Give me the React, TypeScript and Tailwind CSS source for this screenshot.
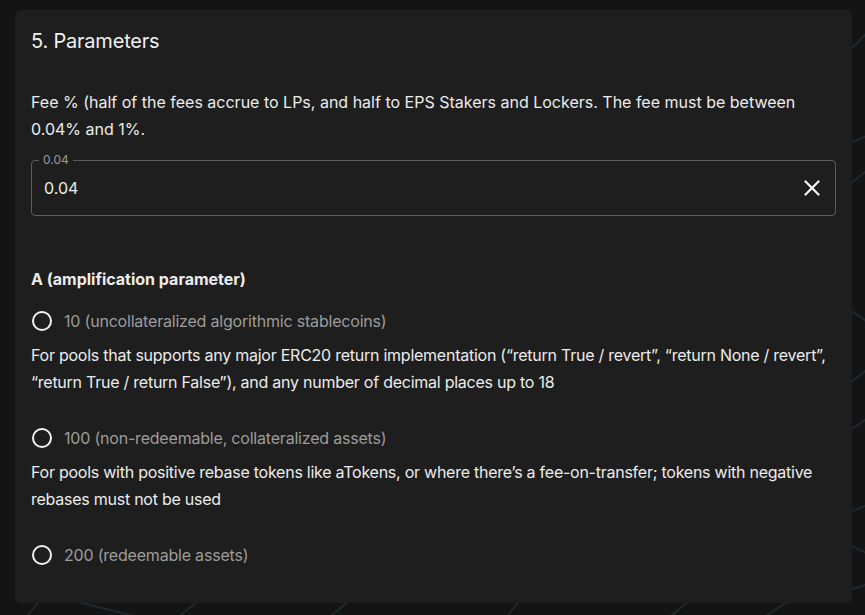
import { X } from "lucide-react";

const options = [
  {
    label: "10 (uncollateralized algorithmic stablecoins)",
    hint: "For pools that supports any major ERC20 return implementation (\u201creturn True / revert\u201d, \u201creturn None / revert\u201d, \u201creturn True / return False\u201d), and any number of decimal places up to 18",
  },
  {
    label: "100 (non-redeemable, collateralized assets)",
    hint: "For pools with positive rebase tokens like aTokens, or where there\u2019s a fee-on-transfer; tokens with negative rebases must not be used",
  },
  { label: "200 (redeemable assets)" },
];

function RadioRow({ label }: { label: string }) {
  return (
    <label className="flex items-center h-[42px] cursor-pointer">
      <span className="w-6 h-6 ml-[16px] flex items-center justify-center">
        <span className="w-5 h-5 rounded-full border-2 border-[#f2f2f2]" />
      </span>
      <span className="ml-[10px] text-[16px] tracking-[-0.2px] text-[#9c9c9c]">{label}</span>
    </label>
  );
}

function Backdrop() {
  return (
    <svg
      aria-hidden="true"
      className="absolute inset-0 w-full h-full"
      viewBox="0 0 865 615"
      preserveAspectRatio="none"
    >
      <g stroke="#1c2a2f" strokeWidth="2" fill="none">
        <path d="M820 80 L880 20" />
        <path d="M835 150 L880 130" />
        <path d="M830 200 L880 160" />
        <path d="M835 300 L880 330" />
        <path d="M840 390 L880 360" />
        <path d="M835 440 L880 410" />
        <path d="M830 520 L880 500" />
        <path d="M840 540 L880 560" />
        <path d="M20 625 L40 600" />
        <path d="M70 600 L170 625" />
        <path d="M180 615 L200 600" />
        <path d="M320 625 L350 600" />
        <path d="M500 625 L520 600" />
        <path d="M660 625 L690 600" />
        <path d="M760 620 L790 600" />
        <path d="M820 600 L880 580" />
      </g>
    </svg>
  );
}

export default function App() {
  return (
    <div
      className="relative w-[865px] h-[615px] overflow-hidden bg-[#141414] text-[#ececec]"
      style={{ fontFamily: "Inter, 'Noto Sans', sans-serif" }}
    >
      <Backdrop />
      <div className="relative ml-[15px] mt-[10px] w-[837px] h-[593px] rounded-md bg-[#1e1e1e] px-4 pt-[17px]">
        <h2 className="text-[20px] leading-[28px] font-normal tracking-[-0.2px] text-[#f0f0f0]">
          5. Parameters
        </h2>

        <p className="mt-[34px] text-[16px] leading-[27px] pr-[30px]">
          Fee % (half of the fees accrue to LPs, and half to EPS Stakers and Lockers. The fee must be between
          0.04% and 1%.
        </p>

        <div className="relative mt-[17px] h-[56px] rounded border border-[#5c5c5c] flex items-center pl-3 pr-[10px]">
          <span className="absolute -top-[8px] left-[7px] px-1 bg-[#1e1e1e] text-[12px] leading-[14px] text-[#9a9a9a]">
            0.04
          </span>
          <span className="flex-1 text-[16px] text-[#ececec]">0.04</span>
          <X className="w-[26px] h-[26px] text-[#f5f5f5]" strokeWidth={2.1} />
        </div>

        <h3 className="mt-[51px] text-[16px] leading-[24px] font-bold">
          A (amplification parameter)
        </h3>

        <div className="mt-[9px] -ml-[17px]">
          {options.map((o, i) => (
            <div key={o.label} className={i > 0 ? "mt-[21px]" : ""}>
              <RadioRow label={o.label} />
              {o.hint && (
                <p className="ml-[17px] text-[16px] leading-[27px] tracking-[-0.25px]">{o.hint}</p>
              )}
            </div>
          ))}
        </div>
      </div>
    </div>
  );
}
